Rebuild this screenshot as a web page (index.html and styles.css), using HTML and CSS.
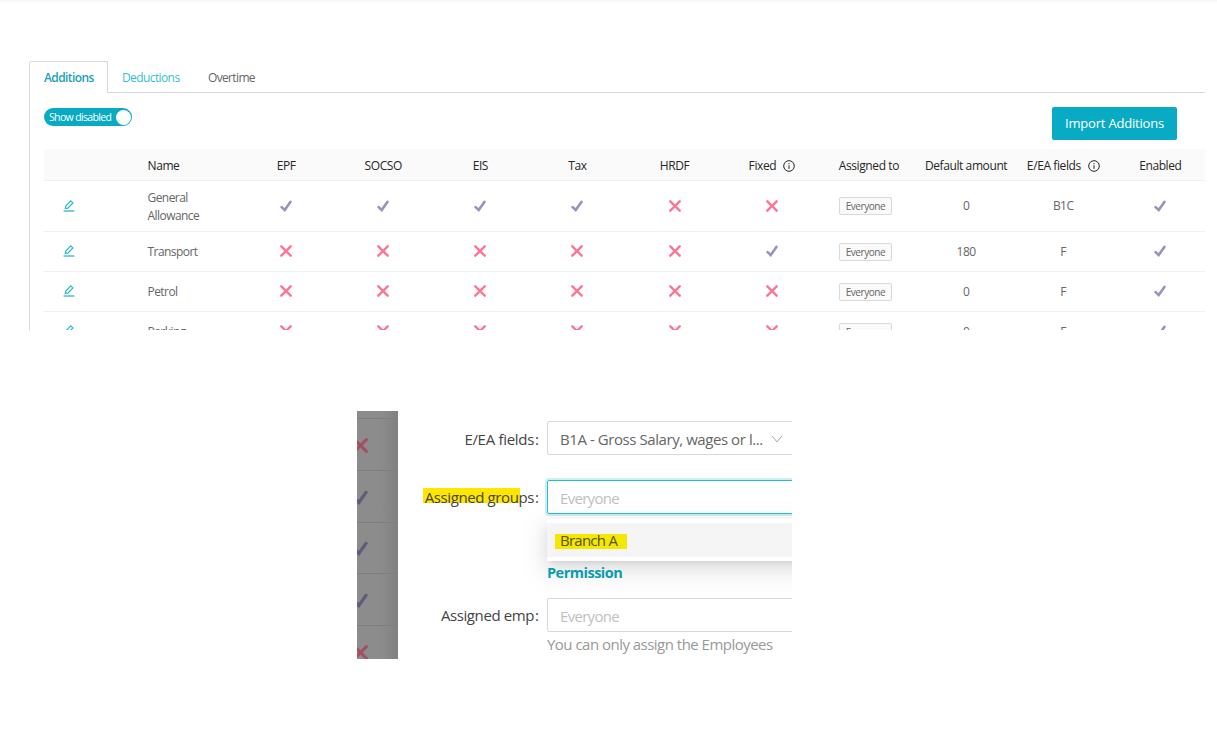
FILE: index.html
```html
<!DOCTYPE html>
<html lang="en">
<head>
<meta charset="utf-8">
<title>Additions</title>
<link rel="stylesheet" href="styles.css">
</head>
<body>
<svg class="defs" width="0" height="0" aria-hidden="true">
  <symbol id="check" viewBox="0 0 12 12"><path d="M1.6 7.1 4.7 10 10.4 1.9" fill="none" stroke="currentColor" stroke-width="2.6" stroke-linecap="round" stroke-linejoin="miter"/></symbol>
  <symbol id="cross" viewBox="0 0 12 12"><path d="M1.3 1.3 10.7 10.7M10.7 1.3 1.3 10.7" fill="none" stroke="currentColor" stroke-width="2.4" stroke-linecap="round"/></symbol>
  <symbol id="edit" viewBox="0 0 12 12"><path d="M.6 11h10.8" fill="none" stroke="currentColor" stroke-width="1.3"/><path d="M2.3 8.6 2.8 6 7.8 .9 9.9 2.9 4.9 8.1Z" fill="none" stroke="currentColor" stroke-width="1.2"/></symbol>
  <symbol id="info" viewBox="0 0 12 12"><circle cx="6" cy="6" r="5.3" fill="none" stroke="currentColor" stroke-width="1"/><path d="M6 5.2v3.7M6 3.1v1.1" fill="none" stroke="currentColor" stroke-width="1"/></symbol>
</svg>
<section class="panel">
  <nav class="tabs">
    <span class="tab active">Additions</span>
    <span class="tab hover">Deductions</span>
    <span class="tab last">Overtime</span>
  </nav>
  <div class="content">
    <div class="toolbar">
      <div class="switch"><span class="switch-text">Show disabled</span><span class="knob"></span></div>
      <button class="import">Import Additions</button>
    </div>
    <div class="table" id="table">
      <div class="row head"><span></span><span class="name">Name</span><span>EPF</span><span>SOCSO</span><span>EIS</span><span>Tax</span><span>HRDF</span><span>Fixed <svg class="info"><use href="#info"/></svg></span><span>Assigned to</span><span>Default amount</span><span>E/EA fields <svg class="info"><use href="#info"/></svg></span><span>Enabled</span></div>
    </div>
  </div>
</section>

<section class="shot">
  <div class="mask">
    <div class="mask-row first"></div>
    <div class="mask-row"><svg class="no"><use href="#cross"/></svg></div>
    <div class="mask-row"><svg class="yes"><use href="#check"/></svg></div>
    <div class="mask-row"><svg class="yes"><use href="#check"/></svg></div>
    <div class="mask-row"><svg class="yes"><use href="#check"/></svg></div>
    <div class="mask-row"><svg class="no"><use href="#cross"/></svg></div>
  </div>
  <div class="form">
    <div class="field ea">
      <span class="label"><span class="l-ea">E/EA fields</span><i>:</i></span>
      <div class="input"><span class="value">B1A - Gross Salary, wages or l...</span><svg class="chevron" viewBox="0 0 12 8"><path d="M1 .8 6 7 11 .8" fill="none" stroke="currentColor" stroke-width="1"/></svg></div>
    </div>
    <div class="field groups">
      <span class="label"><span class="l-groups">Assigned groups</span><i>:</i></span>
      <div class="input focus"><span class="ph">Everyone</span>
        <div class="dropdown"><div class="option"><span class="mark">Branch A</span></div></div>
      </div>
    </div>
    <h3 class="permission">Permission</h3>
    <div class="field emp">
      <span class="label"><span class="l-emp">Assigned emp</span><i>:</i></span>
      <div class="input"><span class="ph">Everyone</span></div>
    </div>
    <p class="hint">You can only assign the Employees</p>
  </div>
</section>
<script src="app.js"></script>
</body>
</html>
```
FILE: styles.css
```css
* { box-sizing: border-box; }
body { margin: 0; width: 1217px; height: 747px; overflow: hidden; background: #fff; font-family: "Open Sans", "Noto Sans", sans-serif; font-size: 12px; color: #666; border-top: 2px solid #f8f8f8; }
.defs { display: block; }
.panel { margin: 59px 0 0 29px; width: 1176px; height: 269px; overflow: hidden; }
.tabs { display: flex; height: 32px; }
.tab { width: 86px; height: 32px; line-height: 33px; padding-left: 15px; border-bottom: 1px solid #d9d9d9; font-size: 12px; letter-spacing: -.6px; white-space: nowrap; }
.tab.active { width: 79px; padding-left: 14px; line-height: 32px; border: 1px solid #d9d9d9; border-bottom: 0; border-radius: 2px 2px 0 0; color: #1b9fb8; font-weight: 600; letter-spacing: -.6px; }
.tab.hover { padding-left: 14px; color: #35c1d0; }
.tab.last { flex: 1; padding-left: 14px; letter-spacing: -.65px; }
.content { height: 237px; border-left: 1px solid #d9d9d9; padding-left: 14px; overflow: hidden; }
.toolbar { display: flex; justify-content: space-between; align-items: flex-start; height: 56px; padding: 14px 28px 0 0; }
.switch { display: flex; align-items: center; justify-content: space-between; width: 88px; height: 18px; margin-top: 1px; padding: 0 1px 0 5px; border-radius: 9px; background: #08abc3; color: #fff; font-size: 10.5px; font-weight: 500; letter-spacing: -.65px; white-space: nowrap; }
.knob { width: 15px; height: 15px; border-radius: 50%; background: #fff; }
.import { width: 125px; height: 33px; margin: 0; padding: 0; border: 0; border-radius: 2px; background: #08abc3; color: #fff; font: 13px/33px "Open Sans", sans-serif; letter-spacing: -.2px; white-space: nowrap; }
.table { width: 1165px; }
.row { display: grid; grid-template-columns: 93.5px 100px repeat(10, 97.15px); height: 40px; align-items: center; text-align: center; border-bottom: 1px solid #f0f0f0; line-height: 18px; letter-spacing: -.55px; }
.row span { white-space: nowrap; }
.row.tall { height: 51px; }
.row.tall .name { padding-top: 2px; }
.row.tall span { line-height: 18px; }
.row.head { height: 32px; padding-top: 2px; background: #fafafa; color: #262626; font-weight: 500; letter-spacing: -.4px; }
.row .name { text-align: left; padding-left: 10px; white-space: normal; }
.row svg { display: inline-block; width: 12px; height: 12px; vertical-align: -1.5px; }
.row .edit { text-align: left; padding-left: 19px; }
.row .edit svg { width: 12px; color: #2db8ca; }
.row svg.info { margin-left: 4px; vertical-align: -2px; }
.yes { color: #9a91bd; }
.no { color: #fb7797; }
.row .tag, .row.tall .tag { display: inline-block; height: 18px; line-height: 16px; width: 53px; border: 1px solid #d9d9d9; border-radius: 2px; background: #fafafa; font-size: 10px; letter-spacing: -.45px; margin-right: 7px; vertical-align: middle; }
.shot { display: flex; width: 435px; height: 248px; margin: 81px 0 0 357px; overflow: hidden; }
.mask { flex: none; width: 41px; background: linear-gradient(90deg, #8c8c8c 60%, #808080); overflow: hidden; }
.mask-row { display: flex; align-items: center; height: 51.8px; border-bottom: 1px solid #7e7e7e; }
.mask-row.first { height: 8px; }
.mask-row svg { flex: none; width: 15px; height: 15px; margin: 2px 0 0 -4px; }
.mask .yes { color: #605b7b; }
.mask .no { color: #a54d61; }
.form { flex: none; width: 394px; padding-top: 10px; font-size: 15px; overflow: hidden; }
.field { display: flex; height: 35px; }
.groups { margin-top: 24px; }
.label { flex: none; display: flex; justify-content: flex-end; width: 149px; padding-right: 8px; line-height: 36px; color: #444; white-space: nowrap; }
.label i { width: 5px; font-style: normal; text-align: right; }
.l-ea { letter-spacing: -.3px; }
.l-groups { letter-spacing: -.4px; background: linear-gradient(#ffe600, #ffe600) 0 8px / 97px 15px no-repeat; padding-left: 2px; }
.l-emp { letter-spacing: -.4px; }
.groups .label, .emp .label { line-height: 35px; }
.input { position: relative; width: 270px; flex: none; display: flex; height: 34px; padding-left: 12px; border: 1px solid #d9d9d9; border-radius: 2px; line-height: 35px; white-space: nowrap; }
.groups .input, .emp .input { line-height: 34px; }
.value { width: 204px; color: #666; letter-spacing: -.43px; }
.ph { color: #bfbfbf; letter-spacing: -.7px; }
.chevron { width: 12px; height: 8px; margin: 13px 0 0 7px; color: #aaa; }
.input.focus { border-color: #28bdce; box-shadow: 0 0 0 2px #d0eef2; }
.dropdown { position: absolute; left: -1px; top: 38px; width: 270px; height: 42px; padding: 4px 0; background: #fff; box-shadow: 0 3px 6px -4px rgba(0,0,0,.14), 0 6px 16px rgba(0,0,0,.1), 0 9px 28px 8px rgba(0,0,0,.05); }
.option { height: 34px; padding-left: 8px; background: #f5f5f5; line-height: 35px; }
.mark { display: inline-block; width: 72px; height: 15px; line-height: 12px; padding-left: 5px; vertical-align: middle; background: #f5e700; color: #555511; letter-spacing: -.75px; }
.permission { margin: 41px 0 0 149px; height: 34px; line-height: 34px; font-size: 14.5px; font-weight: 700; color: #0ba5bb; letter-spacing: -.5px; }
.permission + .emp { margin-top: 8px; }
.hint { margin: 0 0 0 149px; line-height: 22px; color: #999; letter-spacing: -.52px; white-space: nowrap; }
```
FILE: app.js
```js
// Columns: EPF, SOCSO, EIS, Tax, HRDF, Fixed
const items = [
  ['General Allowance', '111100', '0', 'B1C'],
  ['Transport', '000001', '180', 'F'],
  ['Petrol', '000000', '0', 'F'],
  ['Parking', '000000', '0', 'F'],
];
const flag = on => on === '1'
  ? '<span><svg class="yes"><use href="#check"/></svg></span>'
  : '<span><svg class="no"><use href="#cross"/></svg></span>';
document.getElementById('table').insertAdjacentHTML('beforeend', items.map(([name, flags, amount, ea], i) =>
  `<div class="row${i ? '' : ' tall'}"><span class="edit"><svg><use href="#edit"/></svg></span><span class="name">${name}</span>${[...flags].map(flag).join('')}<span><span class="tag">Everyone</span></span><span>${amount}</span><span>${ea}</span>${flag('1')}</div>`).join(''));
```
